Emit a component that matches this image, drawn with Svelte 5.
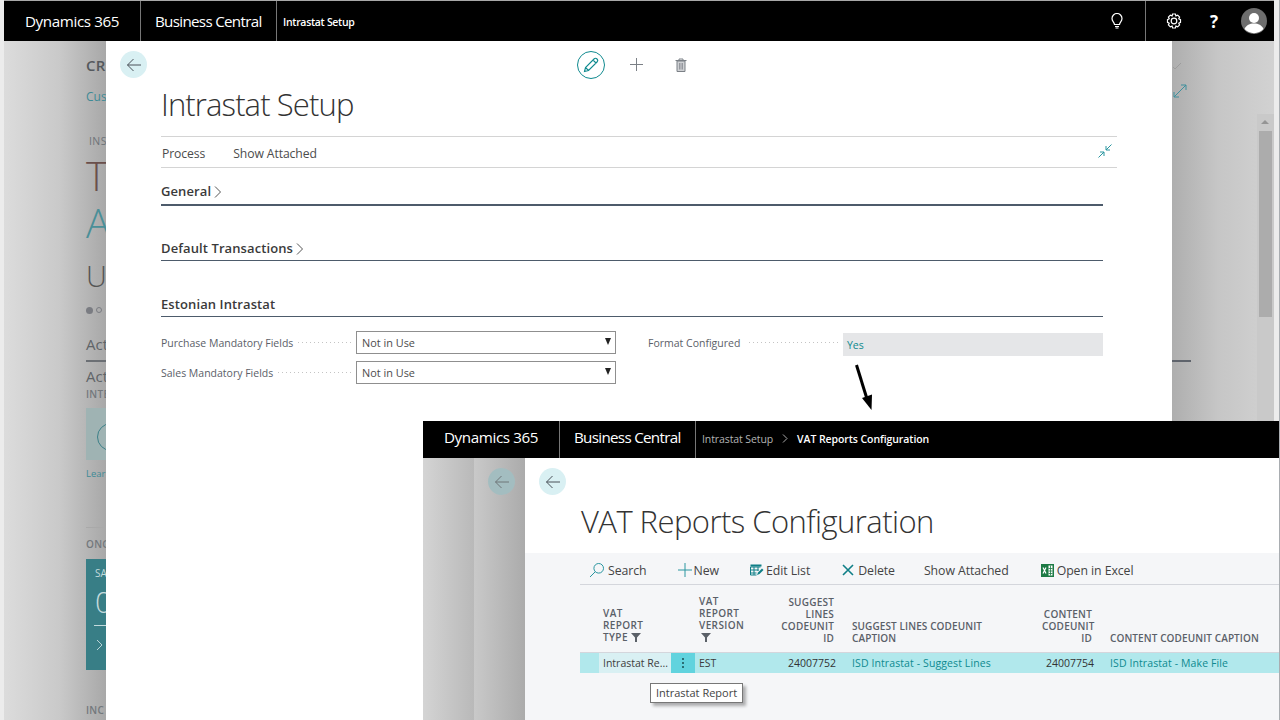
<script>
  const col = [
    { w: 96, cls: 'l f', lines: ['VAT', 'REPORT', 'TYPE'], filter: true },
    { w: 78, cls: 'l f', lines: ['VAT', 'REPORT', 'VERSION'], filter: true, own: true },
    { w: 57, cls: 'r', lines: ['SUGGEST', 'LINES', 'CODEUNIT', 'ID'] },
    { w: 208, cls: 'l pad', lines: ['SUGGEST LINES CODEUNIT', 'CAPTION'] },
    { w: 50, cls: 'r', lines: ['CONTENT', 'CODEUNIT', 'ID'] },
    { w: 170, cls: 'l pad', lines: ['CONTENT CODEUNIT CAPTION'] }
  ];
</script>

<div class="stage">
  <!-- First window -->
  <div class="win one">
    <header class="bar bar-one">
      <span class="brand">Dynamics 365</span>
      <span class="app">Business Central</span>
      <span class="crumb strong">Intrastat Setup</span>
      <span class="spacer"></span>
      <span class="bar-icon bulb">
        <svg width="14" height="16" viewBox="0 0 14 16" fill="none" stroke="#fff" stroke-width="1.2"><path d="M4.5 11.5c0-2-2.5-3-2.5-6a5 5 0 0 1 10 0c0 3-2.5 4-2.5 6z"/><path d="M5 13.5h4M5.5 15h3"/></svg>
      </span>
      <span class="bar-sep"></span>
      <span class="bar-icon gear">
        <svg width="16" height="16" viewBox="0 0 16 16" fill="none" stroke="#fff" stroke-width="1.2"><circle cx="8" cy="8" r="2.8"/><path d="M6.6 1h2.8l.5 1.9 1.8-.8 1.9 2-.8 1.7 1.7.8v2.8l-1.7.8.8 1.7-1.9 2-1.8-.8-.5 1.9H6.6l-.5-1.9-1.8.8-1.9-2 .8-1.7-1.7-.8V6.6l1.7-.8-.8-1.7 1.9-2 1.8.8z"/></svg>
      </span>
      <span class="help">?</span>
      <span class="avatar">
        <svg width="26" height="26" viewBox="0 0 26 26"><circle cx="13" cy="13" r="13" fill="#6d6d6d"/><circle cx="13" cy="10" r="5" fill="#fff"/><path d="M3.5 21c2-4 5-5.500 9.500-5.500s7.500 1.500 9.500 5.500a13 13 0 0 1-19 0z" fill="#fff"/></svg>
      </span>
    </header>

    <div class="desk">
      <div class="shade left">
        <div class="bg-col">
          <div class="bg-cr">CR</div>
          <div class="bg-cus">Cus</div>
          <div class="bg-ins">INS</div>
          <div class="bg-big">T</div>
          <div class="bg-big teal">A</div>
          <div class="bg-u">U</div>
          <div class="bg-dots"><i></i><b></b></div>
          <div class="bg-act">Act</div>
          <div class="bg-act2">Act</div>
          <div class="bg-inte">INTE</div>
          <div class="bg-tile"><span></span></div>
          <div class="bg-learn">Lear</div>
          <div class="bg-rule"></div>
          <div class="bg-ong">ONG</div>
          <div class="bg-cue">
            <div class="cue-sa">SA</div>
            <div class="cue-num">0</div>
            <div class="cue-line"></div>
            <svg width="10" height="12" viewBox="0 0 10 12" fill="none" stroke="#b9d3d6" stroke-width="1"><path d="M2 1l5 5-5 5"/></svg>
          </div>
          <div class="bg-inc">INC</div>
        </div>
      </div>

      <main class="panel">
        <div class="panel-tools">
          <span class="round back">
            <svg width="16" height="14" viewBox="0 0 16 14" fill="none" stroke="#4a5159" stroke-width="1"><path d="M15 7H1.500M7.500 1L1.500 7l6 6"/></svg>
          </span>
          <div class="actions">
            <span class="round edit">
              <svg width="18" height="18" viewBox="0 0 18 18" fill="none" stroke="#0f8a8f" stroke-width="1.100"><path d="M2.500 15.500l1-4L12 3a1.800 1.800 0 0 1 3 3l-8.500 8.500zM3.500 11.500l3 3M11 4l3 3"/></svg>
            </span>
            <svg class="plus" width="15" height="15" viewBox="0 0 15 15" stroke="#7b8086" stroke-width="1"><path d="M7.500 1v13M1 7.500h13"/></svg>
            <svg class="trash" width="12" height="14" viewBox="0 0 12 14" fill="#cfd1d4" stroke="#7b8086" stroke-width="1"><path d="M2 3h8v10.500H2z"/><path d="M.5 2.500h11M4 2.500V1h4v1.500" fill="none"/><path d="M4.500 5v6.500M6 5v6.500M7.500 5v6.500" fill="none" stroke-width=".7"/></svg>
          </div>
        </div>
        <h1 class="title">Intrastat Setup</h1>
        <nav class="menu">
          <span>Process</span>
          <span>Show Attached</span>
          <span class="spacer"></span>
          <svg class="collapse" width="14" height="14" viewBox="0 0 14 14" fill="none" stroke="#2a96a0" stroke-width="1"><path d="M13.500.5L8 6M8 2v4h4M.5 13.500L6 8M2 8h4v4"/></svg>
        </nav>
        <div class="form">
          <section class="fast general">
            <h2>General<svg width="7" height="12" viewBox="0 0 7 12" fill="none" stroke="#555" stroke-width="1"><path d="M1 .5L6.500 6 1 11.500"/></svg></h2>
          </section>
          <section class="fast transactions">
            <h2>Default Transactions<svg width="7" height="12" viewBox="0 0 7 12" fill="none" stroke="#555" stroke-width="1"><path d="M1 .5L6.500 6 1 11.500"/></svg></h2>
          </section>
          <section class="fast estonian">
            <h2>Estonian Intrastat</h2>
          </section>
          <div class="fields">
            <div class="field-col">
              <div class="field">
                <span class="lbl">Purchase Mandatory Fields</span><span class="dots"></span>
                <span class="select">Not in Use<i></i></span>
              </div>
              <div class="field">
                <span class="lbl">Sales Mandatory Fields</span><span class="dots"></span>
                <span class="select">Not in Use<i></i></span>
              </div>
            </div>
            <div class="field-col second">
              <div class="field">
                <span class="lbl">Format Configured</span><span class="dots wide"></span>
                <span class="readonly">Yes</span>
              </div>
            </div>
          </div>
        </div>
      </main>

      <div class="shade right">
        <svg class="r-check" width="10" height="8" viewBox="0 0 10 8" fill="none" stroke="#9c9c9c" stroke-width="1"><path d="M1 5l2 2 6-6"/></svg>
        <svg class="r-expand" width="14" height="14" viewBox="0 0 14 14" fill="none" stroke="#3f8f9c" stroke-width="1"><path d="M1 13L13 1M8 1h5v5M1 8v5h5"/></svg>
        <div class="r-line"></div>
        <div class="scroll"><span class="up"></span><span class="thumb"></span></div>
      </div>
    </div>
  </div>
  <div class="edge"></div>

  <!-- Arrow linking the two windows -->
  <svg class="arrow" width="24" height="50" viewBox="0 0 24 50">
    <path d="M2.500 1l10.500 34" stroke="#000" stroke-width="3" fill="none"/>
    <path d="M8 34l10-3.500L17.500 46z" fill="#000"/>
  </svg>

  <!-- Second window -->
  <div class="win two">
    <header class="bar bar-two">
      <span class="brand">Dynamics 365</span>
      <span class="app">Business Central</span>
      <span class="crumb"><span class="dim">Intrastat Setup</span><svg width="6" height="9" viewBox="0 0 6 9" fill="none" stroke="#aaa" stroke-width="1"><path d="M1 .5l4 4-4 4"/></svg><span class="strong">VAT Reports Configuration</span></span>
    </header>
    <div class="desk2">
      <div class="layer a"></div>
      <div class="layer b">
        <span class="round ghost">
          <svg width="16" height="14" viewBox="0 0 16 14" fill="none" stroke="#6f7679" stroke-width="1"><path d="M15 7H1.500M7.500 1L1.500 7l6 6"/></svg>
        </span>
      </div>
      <main class="list">
        <div class="list-head">
          <span class="round back">
            <svg width="16" height="14" viewBox="0 0 16 14" fill="none" stroke="#4a5159" stroke-width="1"><path d="M15 7H1.500M7.500 1L1.500 7l6 6"/></svg>
          </span>
          <h1 class="title t2">VAT Reports Configuration</h1>
        </div>
        <div class="list-body">
          <nav class="cmds">
            <span class="cmd c-search"><svg width="16" height="16" viewBox="0 0 16 16" fill="none" stroke="#2a96a0" stroke-width="1"><circle cx="9.700" cy="6.300" r="4.800"/><path d="M6.300 9.700L1 15"/></svg>Search</span>
            <span class="cmd c-new"><svg width="14" height="14" viewBox="0 0 14 14" stroke="#2a96a0" stroke-width="1"><path d="M7 0v14M0 7h14"/></svg>New</span>
            <span class="cmd c-edit"><svg width="14" height="13" viewBox="0 0 14 13"><path d="M.5.500h11v2H.5z" fill="#0f7f87"/><path d="M.5 3h10M.5 6h8M.5 9h6M4 3v8M8 3v4M.5 3v8h6" fill="none" stroke="#0f7f87" stroke-width="1"/><path d="M7 11l1-2.500L12 4.500l1.500 1.500-4 4z" fill="#0f7f87"/></svg>Edit List</span>
            <span class="cmd c-del"><svg width="12" height="12" viewBox="0 0 12 12" stroke="#0f7f87" stroke-width="1.600"><path d="M1 1l10 10M11 1L1 11"/></svg>Delete</span>
            <span class="cmd c-att">Show Attached</span>
            <span class="cmd c-xl"><svg width="13" height="13" viewBox="0 0 13 13"><rect width="13" height="13" fill="#1d7a45"/><rect x="7.500" y="1.500" width="4" height="10" fill="#fff"/><path d="M7.500 4.500h4M7.500 7h4M7.500 9.500h4M9.500 1.500v10" stroke="#1d7a45" stroke-width=".8"/><path d="M2 3.500l3 6M5 3.500l-3 6" stroke="#fff" stroke-width="1.200"/></svg>Open in Excel</span>
          </nav>
          <div class="thead">
            {#each col as c}
              <div class="th {c.cls}" style="width:{c.w}px">
                {#each c.lines as line, i}
                  <div>{line}{#if c.filter && !c.own && i === c.lines.length - 1}<svg class="fi" width="10" height="9" viewBox="0 0 10 9"><path d="M0 0h10L6 4.500V9H4V4.500z" fill="#5a6068"/></svg>{/if}</div>
                {/each}
                {#if c.own}<div class="fline"><svg class="fi" width="10" height="9" viewBox="0 0 10 9"><path d="M0 0h10L6 4.500V9H4V4.500z" fill="#5a6068"/></svg></div>{/if}
              </div>
            {/each}
          </div>
          <div class="row">
            <span class="cell sel"></span>
            <span class="cell first">Intrastat Re...</span>
            <span class="cell kebab"><i></i><i></i><i></i></span>
            <span class="cell ver">EST</span>
            <span class="cell num n1">24007752</span>
            <span class="cell link cap1">ISD Intrastat - Suggest Lines</span>
            <span class="cell num n2">24007754</span>
            <span class="cell link">ISD Intrastat - Make File</span>
          </div>
          <div class="tip">Intrastat Report</div>
        </div>
      </main>
    </div>
  </div>
</div>

<style>
  :global(body) { margin: 0; background: #e9e9e9; }
  .stage {
    position: relative; width: 1280px; height: 720px; overflow: hidden;
    font-family: "Open Sans", "Noto Sans", sans-serif; color: #333;
    background: #ececec;
  }
  .win { position: absolute; display: flex; flex-direction: column; box-sizing: border-box; }
  .one { left: 4px; top: 0; width: 1270px; height: 720px; border-top: 1px solid #a8a8a8; }
  .two { left: 423px; top: 421px; width: 856px; height: 299px; }
  .edge { position: absolute; left: 1279px; top: 0; width: 1px; height: 720px; background: #a9adb1; }
  .bar { display: flex; align-items: center; background: #000; color: #fff; flex: none; }
  .bar-one { height: 40px; }
  .bar-two { height: 37px; }
  .brand { font-size: 15.200px; letter-spacing: -.4px; padding: 0 21px; width: 136px; box-sizing: border-box; white-space: nowrap; line-height: 40px; }
  .bar-two .brand { padding-left: 21px; width: 136px; line-height: 33px; height: 37px; }
  .app {
    font-size: 15.200px; letter-spacing: -.7px; border-left: 1px solid #777; border-right: 1px solid #777;
    width: 137px; box-sizing: border-box; padding-left: 14px; white-space: nowrap; line-height: 40px;
  }
  .bar-two .app { line-height: 33px; height: 37px; }
  .crumb { font-size: 10.500px; padding-left: 6px; display: flex; align-items: center; gap: 9px; letter-spacing: -.1px; }
  .bar-two .crumb { padding-bottom: 2px; }
  .strong { font-weight: 600; color: #fff; font-size: 10.500px; letter-spacing: -.08px; }
  .bar-one .crumb.strong { font-weight: 600; letter-spacing: -.3px; padding-top: 2px; }
  .dim { color: #b4b4b4; font-weight: 400; }
  .spacer { flex: 1; }
  .bar-icon { display: flex; }
  .bulb { margin-right: 21px; }
  .bar-sep { width: 1px; height: 40px; background: #777; margin-right: 20px; }
  .gear { margin-right: 28px; }
  .help { font-size: 17px; font-weight: 700; margin-right: 23px; line-height: 1; }
  .avatar { display: flex; margin-right: 7px; }

  .desk { flex: 1; display: flex; min-height: 0; }
  .shade { position: relative; overflow: hidden; flex: none; }
  .left { width: 102px; background: linear-gradient(90deg, #dcdcdc 0%, #c9c9c9 55%, #a8a8a8 100%); }
  .right { width: 102px; background: linear-gradient(90deg, #aeaeae 0%, #c6c6c6 45%, #d2d2d2 100%); }
  .bg-col { padding: 14px 0 0 82px; width: 200px; color: #5f6468; }
  .bg-cr { font-size: 15px; font-weight: 600; line-height: 20px; letter-spacing: .3px; color: #55595d; }
  .bg-cus { font-size: 12px; color: #3f8b96; line-height: 16px; margin-top: 14px; }
  .bg-ins { font-size: 10.500px; line-height: 14px; margin: 29px 0 0 3px; color: #6e7378; letter-spacing: .4px; }
  .bg-big { font-size: 40px; font-weight: 300; line-height: 47px; color: #6a4f4b; }
  .bg-big.teal { color: #4a8f98; }
  .bg-ins + .bg-big { margin-top: 4px; }
  .bg-u { font-size: 29px; font-weight: 300; line-height: 36px; margin-top: 12px; color: #555; }
  .bg-dots { display: flex; align-items: center; gap: 3px; height: 14px; margin-top: 9px; }
  .bg-dots i { width: 7px; height: 7px; border-radius: 50%; background: #7a7c82; }
  .bg-dots b { width: 6px; height: 6px; border-radius: 50%; border: 1px solid #7a7c82; box-sizing: border-box; }
  .bg-act { font-size: 15px; line-height: 20px; margin-top: 17px; padding-bottom: 6px; border-bottom: 2px solid #6b6f74; }
  .bg-act2 { font-size: 15px; line-height: 20px; margin-top: 4px; }
  .bg-inte { font-size: 10px; font-weight: 600; line-height: 14px; color: #73787c; letter-spacing: .3px; margin-top: 1px; }
  .bg-tile { height: 52px; background: #9fb3b3; margin-top: 7px; position: relative; }
  .bg-tile span { position: absolute; left: 11px; top: 15px; width: 26px; height: 26px; border-radius: 50%; border: 1.500px solid #3c8088; }
  .bg-learn { font-size: 9.500px; color: #3f8b96; margin-top: 7px; line-height: 14px; }
  .bg-rule { height: 1px; background: #a9a9a9; margin-top: 46px; }
  .bg-ong { font-size: 10px; font-weight: 600; color: #73787c; line-height: 14px; margin-top: 9px; letter-spacing: .3px; }
  .bg-cue { height: 111px; background: #387e86; margin-top: 8px; padding: 7px 0 0 9px; box-sizing: border-box; color: #c3dadc; }
  .cue-sa { font-size: 10px; line-height: 14px; }
  .cue-num { font-size: 30px; font-weight: 300; line-height: 36px; margin-top: 4px; }
  .cue-line { height: 1px; background: #c3dadc; margin: 5px 0 8px -1px; }
  .bg-inc { font-size: 10px; font-weight: 600; color: #73787c; line-height: 14px; margin-top: 33px; letter-spacing: .3px; }

  .r-check { position: absolute; left: 0; top: 21px; }
  .r-expand { position: absolute; left: 1px; top: 43px; }
  .r-line { position: absolute; left: 0; top: 319px; width: 19px; height: 2px; background: #5f646c; }
  .scroll { position: absolute; left: 85px; top: 73px; bottom: 0; width: 17px; display: flex; flex-direction: column; align-items: center; background: #c9c9c9; }
  .up { width: 17px; height: 17px; display: block; position: relative; }
  .up::after { content: ""; position: absolute; left: 4px; top: 6px; border: 4px solid transparent; border-top: 0; border-bottom: 4px solid #959595; }
  .thumb { width: 13px; height: 186px; background: #acacac; display: block; }

  .panel { width: 1066px; background: #fff; flex: none; padding: 0 55px; box-sizing: border-box; display: flex; flex-direction: column; position: relative; }
  .panel-tools { height: 42px; flex: none; display: flex; position: relative; }
  .round { width: 27px; height: 27px; border-radius: 50%; display: flex; align-items: center; justify-content: center; box-sizing: border-box; }
  .back { background: #d9f0f3; }
  .panel-tools .back { position: absolute; left: -41px; top: 10px; }
  .actions { display: flex; align-items: center; position: absolute; left: 416px; top: 10px; height: 27px; }
  .edit { width: 28px; height: 28px; border: 1.300px solid #0f8a8f; background: #fff; }
  .plus { margin-left: 24px; }
  .trash { margin-left: 31px; }
  .title { font-size: 31px; font-weight: 300; line-height: 42px; margin: 0; color: #333; letter-spacing: -.88px; white-space: nowrap; }
  .panel .title { height: 53px; flex: none; }
  .menu {
    display: flex; align-items: center; height: 28px; flex: none; border-top: 1px solid #d4d4d4; border-bottom: 1px solid #d4d4d4;
    font-size: 12.200px; gap: 28px; padding: 2px 6px 0 1px; box-sizing: content-box; color: #4c4c4c; letter-spacing: -.1px;
  }
  .collapse { margin: -4px -1px 0 0; }
  .form { width: 942px; padding-top: 14px; }
  .fast h2 { margin: 0; font-size: 13px; font-weight: 600; line-height: 19px; color: #3a3a3a; display: flex; align-items: center; gap: 3px; letter-spacing: .1px; }
  .fast { border-bottom: 1px solid #4d5b6b; }
  .general { height: 22px; border-bottom-width: 2px; margin-bottom: 33px; }
  .transactions { height: 21px; margin-bottom: 34px; }
  .estonian { height: 21px; }
  .fields { display: flex; padding-top: 14px; }
  .field-col { width: 455px; display: flex; flex-direction: column; gap: 7px; }
  .second { margin-left: 32px; }
  .field { display: flex; align-items: center; height: 23px; }
  .lbl { font-size: 10.500px; color: #5b6068; white-space: nowrap; }
  .dots {
    flex: 1; height: 1px; margin: 0 4px 0 5px;
    background: repeating-linear-gradient(90deg, #c4c4c4 0 1px, transparent 1px 4px);
  }
  .dots.wide { margin-left: 9px; }
  .select {
    width: 260px; height: 23px; border: 1px solid #8f8f8f; box-sizing: border-box; flex: none;
    font-size: 10.900px; line-height: 22px; padding-left: 5px; color: #4c4c4c; position: relative;
  }
  .select i { position: absolute; right: 4px; top: 6px; border: 3.500px solid transparent; border-bottom: 0; border-top: 7px solid #222; }
  .readonly { width: 260px; height: 23px; margin-top: 4px; background: #e5e6e8; flex: none; font-size: 10.500px; line-height: 24px; padding-left: 4px; box-sizing: border-box; color: #0f8a8f; }

  .arrow { position: absolute; left: 854px; top: 364px; }

  .desk2 { flex: 1; display: flex; min-height: 0; }
  .layer { flex: none; width: 51px; height: 100%; }
  .layer.a { background: linear-gradient(90deg, #d4d4d4, #b9b9b9); }
  .layer.b { background: linear-gradient(90deg, #c9c9c9, #ababab); overflow: hidden; }
  .ghost { background: #a3bdc0; margin: 10px 0 0 14px; }
  .list { flex: 1; background: #fff; display: flex; flex-direction: column; min-width: 0; }
  .list-head { height: 95px; position: relative; padding-left: 56px; box-sizing: border-box; flex: none; }
  .list-head .back { position: absolute; left: 14px; top: 10px; }
  .t2 { padding-top: 42px; line-height: 42px; letter-spacing: -.55px; }
  .list-body { flex: 1; background: #f5f6f8; padding-left: 55px; position: relative; }
  .cmds { display: flex; align-items: center; height: 28px; padding-top: 3px; border-bottom: 1px solid #d4d6dc; font-size: 12.300px; color: #444; letter-spacing: -.07px; }
  .cmd { display: flex; align-items: center; white-space: nowrap; gap: 2px; }
  .c-search { gap: 3px; margin-left: 9px; }
  .c-new { margin-left: 31px; gap: 2px; }
  .c-edit { margin-left: 31px; }
  .c-del { margin-left: 32px; gap: 4px; }
  .c-att { margin-left: 29px; }
  .c-xl { margin-left: 32px; gap: 3px; }
  .thead { display: flex; height: 68px; align-items: flex-end; border-bottom: 1px solid #d4d6dc; box-sizing: border-box; padding: 0 0 8px 23px; }
  .th { font-size: 10px; font-weight: 600; line-height: 12px; color: #5a6068; flex: none; box-sizing: border-box; letter-spacing: .2px; white-space: nowrap; }
  .th.r { text-align: right; }
  .th.f { padding-bottom: 1px; letter-spacing: .4px; }
  .th.pad { padding-left: 18px; letter-spacing: .1px; }
  .fi { margin-left: 3px; vertical-align: -1px; }
  .fline { height: 12px; }
  .fline .fi { margin-left: 2px; }
  .row { display: flex; height: 20px; align-items: center; background: #b1e8ec; font-size: 10.500px; color: #3c3c3c; }
  .cell { white-space: nowrap; }
  .sel { width: 19px; height: 100%; }
  .first { width: 72px; height: 100%; background: #d9f0f3; line-height: 20px; padding-left: 4px; box-sizing: border-box; }
  .kebab { width: 24px; height: 100%; background: #61d3de; display: flex; flex-direction: column; align-items: center; justify-content: center; gap: 2px; }
  .kebab i { width: 2px; height: 2px; background: #2a6f75; display: block; }
  .ver { padding-left: 4px; width: 40px; box-sizing: border-box; }
  .num { color: #333; text-align: right; }
  .n1 { width: 101px; }
  .cap1 { margin-left: 16px; width: 160px; }
  .n2 { width: 82px; }
  .row .link { color: #0e8a90; letter-spacing: .1px; }
  .row .link:last-child { margin-left: 16px; }
  .tip {
    position: absolute; left: 125px; top: 130px; background: #fff; border: 1px solid #777; box-shadow: 3px 3px 3px rgba(0,0,0,.3);
    font-size: 11px; line-height: 18px; padding: 0 5px; color: #444; white-space: nowrap;
  }
</style>
